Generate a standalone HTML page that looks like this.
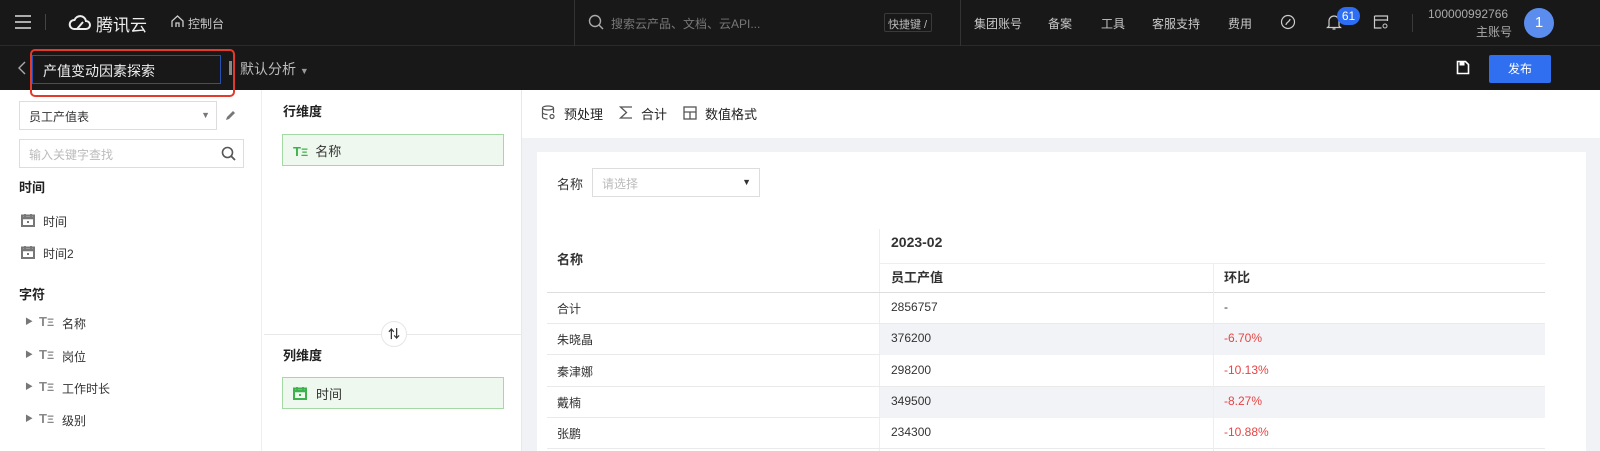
<!DOCTYPE html>
<html><head><meta charset="utf-8"><style>
*{box-sizing:border-box;margin:0;padding:0}
body{width:1600px;height:451px;overflow:hidden;background:#fff;font-family:"Liberation Sans","Noto Sans CJK SC",sans-serif;font-size:12px;color:#333;position:relative}
.a{position:absolute}
.top{left:0;top:0;width:1600px;height:46px;background:#181818;border-bottom:1px solid #2a2a2a}
.sub{left:0;top:46px;width:1600px;height:44px;background:#181818}
.w{color:#c8c8c8;font-size:12px}
.lp{left:0;top:90px;width:262px;height:361px;border-right:1px solid #eee}
.mp{left:262px;top:90px;width:260px;height:361px;border-right:1px solid #e8e8e8}
.gray{left:522px;top:138px;width:1078px;height:313px;background:#f1f2f5}
.card{left:537px;top:152px;width:1049px;height:299px;background:#fff}
.row{position:absolute;left:547px;width:998px;height:31px;border-bottom:1px solid #eaeaea;font-size:12px}
.row span{position:absolute;top:7px}
.red{color:#e54545}
.ti{font-weight:bold;color:#888;font-size:13px}
</style></head><body>
<div class="a top"></div>
<div class="a sub"></div>
<svg class="a" style="left:14px;top:14px" width="18" height="16"><path d="M1 2h16M1 8h16M1 14h16" stroke="#ddd" stroke-width="1.6"/></svg>
<div class="a" style="left:45px;top:14px;width:1px;height:16px;background:#444"></div>
<svg class="a" style="left:68px;top:12px" width="24" height="20"><path d="M6 17h12a4 4 0 0 0 0-8 6 6 0 0 0-11.5-1A4.5 4.5 0 0 0 6 17z" fill="none" stroke="#eee" stroke-width="2"/><path d="M9 17l6-7" stroke="#eee" stroke-width="2"/></svg>
<div class="a" style="left:96px;top:11px;color:#eee;font-size:17px">腾讯云</div>
<svg class="a" style="left:171px;top:15px" width="13" height="13"><path d="M1 12V6l5.5-5 5.5 5v6M5 12V8h3v4" fill="none" stroke="#ccc" stroke-width="1.3"/></svg>
<div class="a w" style="left:188px;top:15px">控制台</div>
<div class="a" style="left:574px;top:0;width:1px;height:46px;background:#333"></div>
<div class="a" style="left:960px;top:0;width:1px;height:46px;background:#333"></div>
<svg class="a" style="left:588px;top:14px" width="16" height="16"><circle cx="7" cy="7" r="5.5" fill="none" stroke="#aaa" stroke-width="1.4"/><path d="M11 11l4 4" stroke="#aaa" stroke-width="1.4"/></svg>
<div class="a" style="left:611px;top:15px;color:#777">搜索云产品、文档、云API...</div>
<div class="a" style="left:884px;top:13px;width:48px;height:19px;border:1px solid #3a3a3a;border-radius:2px;color:#bbb;font-size:11px;padding:2px 0 0 3px">快捷键 /</div>
<div class="a w" style="left:974px;top:15px">集团账号</div>
<div class="a w" style="left:1048px;top:15px">备案</div>
<div class="a w" style="left:1101px;top:15px">工具</div>
<div class="a w" style="left:1152px;top:15px">客服支持</div>
<div class="a w" style="left:1228px;top:15px">费用</div>
<svg class="a" style="left:1280px;top:14px" width="16" height="16"><circle cx="8" cy="8" r="6.5" fill="none" stroke="#ccc" stroke-width="1.2"/><path d="M6 11c0-3 4-3 4-6" fill="none" stroke="#ccc" stroke-width="1.2"/></svg>
<svg class="a" style="left:1326px;top:13px" width="16" height="18"><path d="M3 13V8a5 5 0 0 1 10 0v5l1.5 1.5h-13zM6.5 16h3" fill="none" stroke="#ccc" stroke-width="1.2"/></svg>
<div class="a" style="left:1337px;top:7px;width:23px;height:18px;border-radius:9px;background:#2d6ef5;color:#fff;font-size:12px;text-align:center;line-height:18px">61</div>
<svg class="a" style="left:1373px;top:14px" width="16" height="16"><path d="M1.5 2h13v5M1.5 2v12h7M1.5 6h13" fill="none" stroke="#ccc" stroke-width="1.2"/><circle cx="12" cy="12" r="2" fill="none" stroke="#ccc"/></svg>
<div class="a" style="left:1412px;top:14px;width:1px;height:18px;background:#3a3a3a"></div>
<div class="a" style="left:1428px;top:7px;color:#aaa;font-size:12px">100000992766</div>
<div class="a" style="left:1476px;top:23px;color:#aaa;font-size:12px">主账号</div>
<div class="a" style="left:1524px;top:8px;width:30px;height:30px;border-radius:50%;background:#5b8def;color:#fff;font-size:15px;text-align:center;line-height:30px">1</div>
<svg class="a" style="left:17px;top:60px" width="10" height="16"><path d="M8 2L2 8l6 6" fill="none" stroke="#aaa" stroke-width="1.4"/></svg>
<div class="a" style="left:30px;top:49px;width:205px;height:48px;border:2px solid #e33b2b;border-radius:5px;z-index:3"></div>
<div class="a" style="left:32px;top:55px;width:189px;height:29px;border:1px solid #2550b0;color:#eee;font-size:14px;padding:5px 0 0 10px">产值变动因素探索</div>
<div class="a" style="left:229px;top:61px;width:3px;height:14px;background:#888"></div>
<div class="a" style="left:240px;top:59px;color:#bbb;font-size:14px">默认分析 <span style="font-size:9px;color:#999">▼</span></div>
<svg class="a" style="left:1456px;top:60px" width="14" height="15"><path d="M1.5 1.5h8l3 3v9h-11z" fill="none" stroke="#fff" stroke-width="1.6"/><path d="M4 2v3h4V2" fill="#fff" stroke="#fff"/></svg>
<div class="a" style="left:1489px;top:55px;width:62px;height:28px;background:#2f6ff0;border-radius:2px;color:#fff;font-size:12px;text-align:center;line-height:28px">发布</div>
<div class="a lp"></div>
<div class="a" style="left:19px;top:101px;width:198px;height:29px;border:1px solid #ddd;padding:6px 0 0 9px;font-size:12px">员工产值表<span style="position:absolute;right:6px;top:8px;font-size:9px;color:#777">▼</span></div>
<svg class="a" style="left:224px;top:109px" width="13" height="13"><path d="M2 11l1-3 6-6 2 2-6 6z" fill="#777"/></svg>
<div class="a" style="left:19px;top:139px;width:225px;height:29px;border:1px solid #ddd;padding:6px 0 0 9px;color:#bbb;font-size:12px">输入关键字查找</div>
<svg class="a" style="left:221px;top:146px" width="15" height="15"><circle cx="6.5" cy="6.5" r="5" fill="none" stroke="#555" stroke-width="1.6"/><path d="M10 10l4 4" stroke="#555" stroke-width="1.8"/></svg>
<div class="a" style="left:19px;top:177px;font-size:13px;font-weight:bold;color:#222">时间</div>
<div class="a" style="left:19px;top:284px;font-size:13px;font-weight:bold;color:#222">字符</div>
<svg class="a" style="left:21px;top:213px" width="14" height="14"><rect x="1" y="2.5" width="12" height="10.5" fill="none" stroke="#777" stroke-width="2"/><path d="M1 5h12" stroke="#777" stroke-width="2.5"/><path d="M4 1v3M10 1v3" stroke="#777" stroke-width="1.8"/><rect x="6" y="8" width="2" height="2" fill="#777"/></svg>
<div class="a" style="left:43px;top:213px">时间</div>
<svg class="a" style="left:21px;top:245px" width="14" height="14"><rect x="1" y="2.5" width="12" height="10.5" fill="none" stroke="#777" stroke-width="2"/><path d="M1 5h12" stroke="#777" stroke-width="2.5"/><path d="M4 1v3M10 1v3" stroke="#777" stroke-width="1.8"/><rect x="6" y="8" width="2" height="2" fill="#777"/></svg>
<div class="a" style="left:43px;top:245px">时间2</div>
<div class="a" style="left:25px;top:316px;font-size:8px;color:#777">▶</div><div class="a ti" style="left:39px;top:314px">T<span style="font-size:11px">Ξ</span></div><div class="a" style="left:62px;top:315px">名称</div>
<div class="a" style="left:25px;top:349px;font-size:8px;color:#777">▶</div><div class="a ti" style="left:39px;top:347px">T<span style="font-size:11px">Ξ</span></div><div class="a" style="left:62px;top:348px">岗位</div>
<div class="a" style="left:25px;top:381px;font-size:8px;color:#777">▶</div><div class="a ti" style="left:39px;top:379px">T<span style="font-size:11px">Ξ</span></div><div class="a" style="left:62px;top:380px">工作时长</div>
<div class="a" style="left:25px;top:413px;font-size:8px;color:#777">▶</div><div class="a ti" style="left:39px;top:411px">T<span style="font-size:11px">Ξ</span></div><div class="a" style="left:62px;top:412px">级别</div>
<div class="a mp"></div>
<div class="a" style="left:283px;top:101px;font-size:13px;font-weight:bold;color:#222">行维度</div>
<div class="a" style="left:282px;top:134px;width:222px;height:32px;border:1px solid #a4d8a4;background:#eef8ee;padding:6px 0 0 10px;font-size:13px"><b style="color:#3cb34a">T<span style="font-size:11px">Ξ</span></b>&nbsp; 名称</div>
<div class="a" style="left:264px;top:334px;width:258px;height:1px;background:#e8e8e8"></div>
<div class="a" style="left:381px;top:321px;width:26px;height:26px;border-radius:50%;border:1px solid #e6e6e6;background:#fff;text-align:center;line-height:24px;font-weight:bold;font-size:12px;color:#333">⇅</div>
<div class="a" style="left:283px;top:345px;font-size:13px;font-weight:bold;color:#222">列维度</div>
<div class="a" style="left:282px;top:377px;width:222px;height:32px;border:1px solid #a4d8a4;background:#eef8ee;padding:6px 0 0 33px;font-size:13px">时间</div>
<svg class="a" style="left:293px;top:386px" width="14" height="14"><rect x="1" y="2.5" width="12" height="10.5" fill="none" stroke="#3cb34a" stroke-width="2"/><path d="M1 5h12" stroke="#3cb34a" stroke-width="2.5"/><path d="M4 1v3M10 1v3" stroke="#3cb34a" stroke-width="1.8"/><rect x="6" y="8" width="2" height="2" fill="#3cb34a"/></svg>
<svg class="a" style="left:541px;top:105px" width="15" height="15"><ellipse cx="7" cy="3" rx="5.5" ry="2" fill="none" stroke="#555" stroke-width="1.2"/><path d="M1.5 3v9c0 1 2 2 5 2M12.5 3v5M1.5 7.5c0 1 2 2 5 2" fill="none" stroke="#555" stroke-width="1.2"/><circle cx="11" cy="11.5" r="2" fill="none" stroke="#555" stroke-width="1.2"/></svg>
<div class="a" style="left:564px;top:104px;font-size:13px;color:#222">预处理</div>
<svg class="a" style="left:619px;top:105px" width="14" height="15"><path d="M13 2H1.5l6 5.5-6 5.5H13" fill="none" stroke="#555" stroke-width="1.3"/></svg>
<div class="a" style="left:641px;top:104px;font-size:13px;color:#222">合计</div>
<svg class="a" style="left:683px;top:106px" width="14" height="14"><rect x="1" y="1" width="12" height="12" fill="none" stroke="#555" stroke-width="1.3"/><path d="M1 6h12M7 6v7" stroke="#555" stroke-width="1.3"/></svg>
<div class="a" style="left:705px;top:104px;font-size:13px;color:#222">数值格式</div>
<div class="a gray"></div>
<div class="a card"></div>
<div class="a" style="left:557px;top:174px;font-size:13px">名称</div>
<div class="a" style="left:592px;top:168px;width:168px;height:29px;border:1px solid #ddd;padding:6px 0 0 9px;color:#bbb;font-size:12px">请选择<span style="position:absolute;right:8px;top:8px;color:#333;font-size:9px">▼</span></div>
<div class="a" style="left:879px;top:229px;width:1px;height:222px;background:#eee"></div>
<div class="a" style="left:879px;top:263px;width:666px;height:1px;background:#eee"></div>
<div class="a" style="left:547px;top:292px;width:998px;height:1px;background:#ddd"></div>
<div class="a" style="left:557px;top:249px;font-size:13px;font-weight:bold;color:#333">名称</div>
<div class="a" style="left:891px;top:234px;font-size:14px;font-weight:bold;color:#333">2023-02</div>
<div class="a" style="left:891px;top:267px;font-size:13px;font-weight:bold;color:#333">员工产值</div>
<div class="a" style="left:1224px;top:267px;font-size:13px;font-weight:bold;color:#333">环比</div>
<div class="row" style="top:293px"><span style="left:10px">合计</span><span style="left:344px">2856757</span><span style="left:677px">-</span></div>
<div class="row" style="top:324px"><div class="a" style="left:333px;top:0;width:665px;height:31px;background:#f2f3f6"></div><span style="left:10px">朱晓晶</span><span style="left:344px">376200</span><span class="red" style="left:677px">-6.70%</span></div>
<div class="row" style="top:356px"><span style="left:10px">秦津娜</span><span style="left:344px">298200</span><span class="red" style="left:677px">-10.13%</span></div>
<div class="row" style="top:387px"><div class="a" style="left:333px;top:0;width:665px;height:31px;background:#f2f3f6"></div><span style="left:10px">戴楠</span><span style="left:344px">349500</span><span class="red" style="left:677px">-8.27%</span></div>
<div class="row" style="top:418px"><span style="left:10px">张鹏</span><span style="left:344px">234300</span><span class="red" style="left:677px">-10.88%</span></div>
<div class="a" style="left:1213px;top:263px;width:1px;height:188px;background:#eee"></div>
</body></html>
